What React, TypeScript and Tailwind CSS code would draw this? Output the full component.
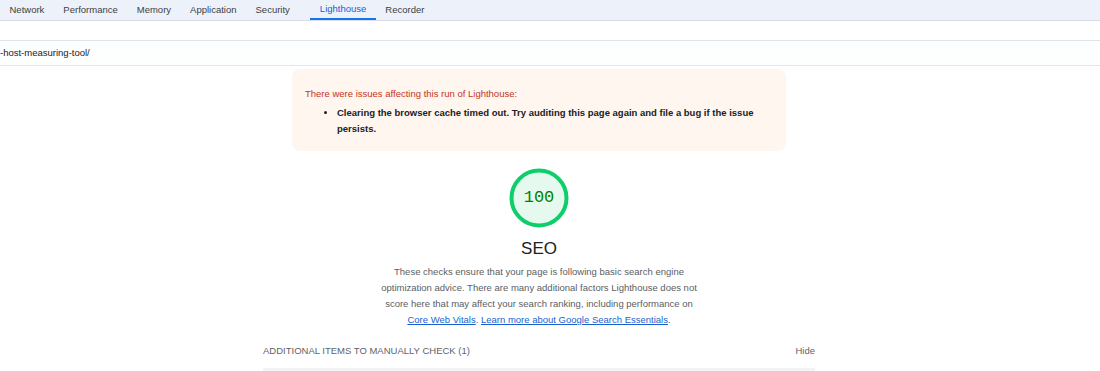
const TABS = ["Network", "Performance", "Memory", "Application", "Security", "Lighthouse", "Recorder"];

function TabBar() {
  return (
    <div className="flex h-[21px] items-stretch bg-[#edf2fa] border-b border-[#d6dde8]">
      {TABS.map((t) => {
        const active = t === "Lighthouse";
        return (
          <div
            key={t}
            className={
              active
                ? "ml-[11px] flex items-center px-[9.5px] text-[9.5px] text-[#1a5fd0] border-b-2 border-[#1a73e8]"
                : "flex items-center px-[9.5px] text-[9.5px] text-[#3c4043]"
            }
          >
            {t}
          </div>
        );
      })}
    </div>
  );
}

function Gauge() {
  return (
    <div className="relative h-[60px] w-[60px]">
      <svg viewBox="0 0 60 60" className="absolute inset-0 h-full w-full">
        <circle cx="30" cy="30" r="27.5" fill="#e6f9ee" stroke="#0cce6b" strokeWidth="4" />
      </svg>
      <div className="relative flex h-full w-full items-center justify-center font-['Liberation_Mono',monospace] text-[17px] text-[#008000]">
        100
      </div>
    </div>
  );
}

export default function App() {
  return (
    <div className="h-[371px] w-[1100px] overflow-hidden bg-white font-['Liberation_Sans',Arial,sans-serif]">
      <TabBar />
      <div className="h-[20px] border-b border-[#dfe3ea]" />
      <div className="flex h-[25px] items-center border-b border-[#e3e6ea] bg-[#fdfefe] text-[9.5px] text-[#202124]">
        -host-measuring-tool/
      </div>

      <div className="flex w-[1078px] flex-col items-center">
        <div className="mt-[3px] w-[494px] rounded-[8px] bg-[#fef6ef] pl-[13px] pr-[10px] pt-[17px] pb-[14px] text-[9.5px]">
          <div className="leading-[16px] text-[#c8341a]">There were issues affecting this run of Lighthouse:</div>
          <ul className="mt-[3px] list-disc pl-[32px] font-bold leading-[16px] text-[#202124]">
            <li>
              Clearing the browser cache timed out. Try auditing this page again and file a bug if the issue persists.
            </li>
          </ul>
        </div>

        <div className="mt-[17px]">
          <Gauge />
        </div>
        <div className="mt-[11px] text-[17px] leading-[20px] text-[#212121]">SEO</div>
        <p className="mt-[5px] text-center text-[9.5px] leading-[16px] text-[#5a5e63]">
          These checks ensure that your page is following basic search engine
          <br />
          optimization advice. There are many additional factors Lighthouse does not
          <br />
          score here that may affect your search ranking, including performance on
          <br />
          <a className="text-[#1a5fd0] underline">Core Web Vitals</a>.{" "}
          <a className="text-[#1a5fd0] underline">Learn more about Google Search Essentials</a>.
        </p>

        <div className="mt-[15px] w-[552px]">
          <div className="flex items-center justify-between text-[9.5px] leading-[16px] text-[#5f6368]">
            <span>ADDITIONAL ITEMS TO MANUALLY CHECK (1)</span>
            <span>Hide</span>
          </div>
          <div className="mt-[9px] h-[4px] bg-[#f3f3f3]" />
        </div>
      </div>
    </div>
  );
}
